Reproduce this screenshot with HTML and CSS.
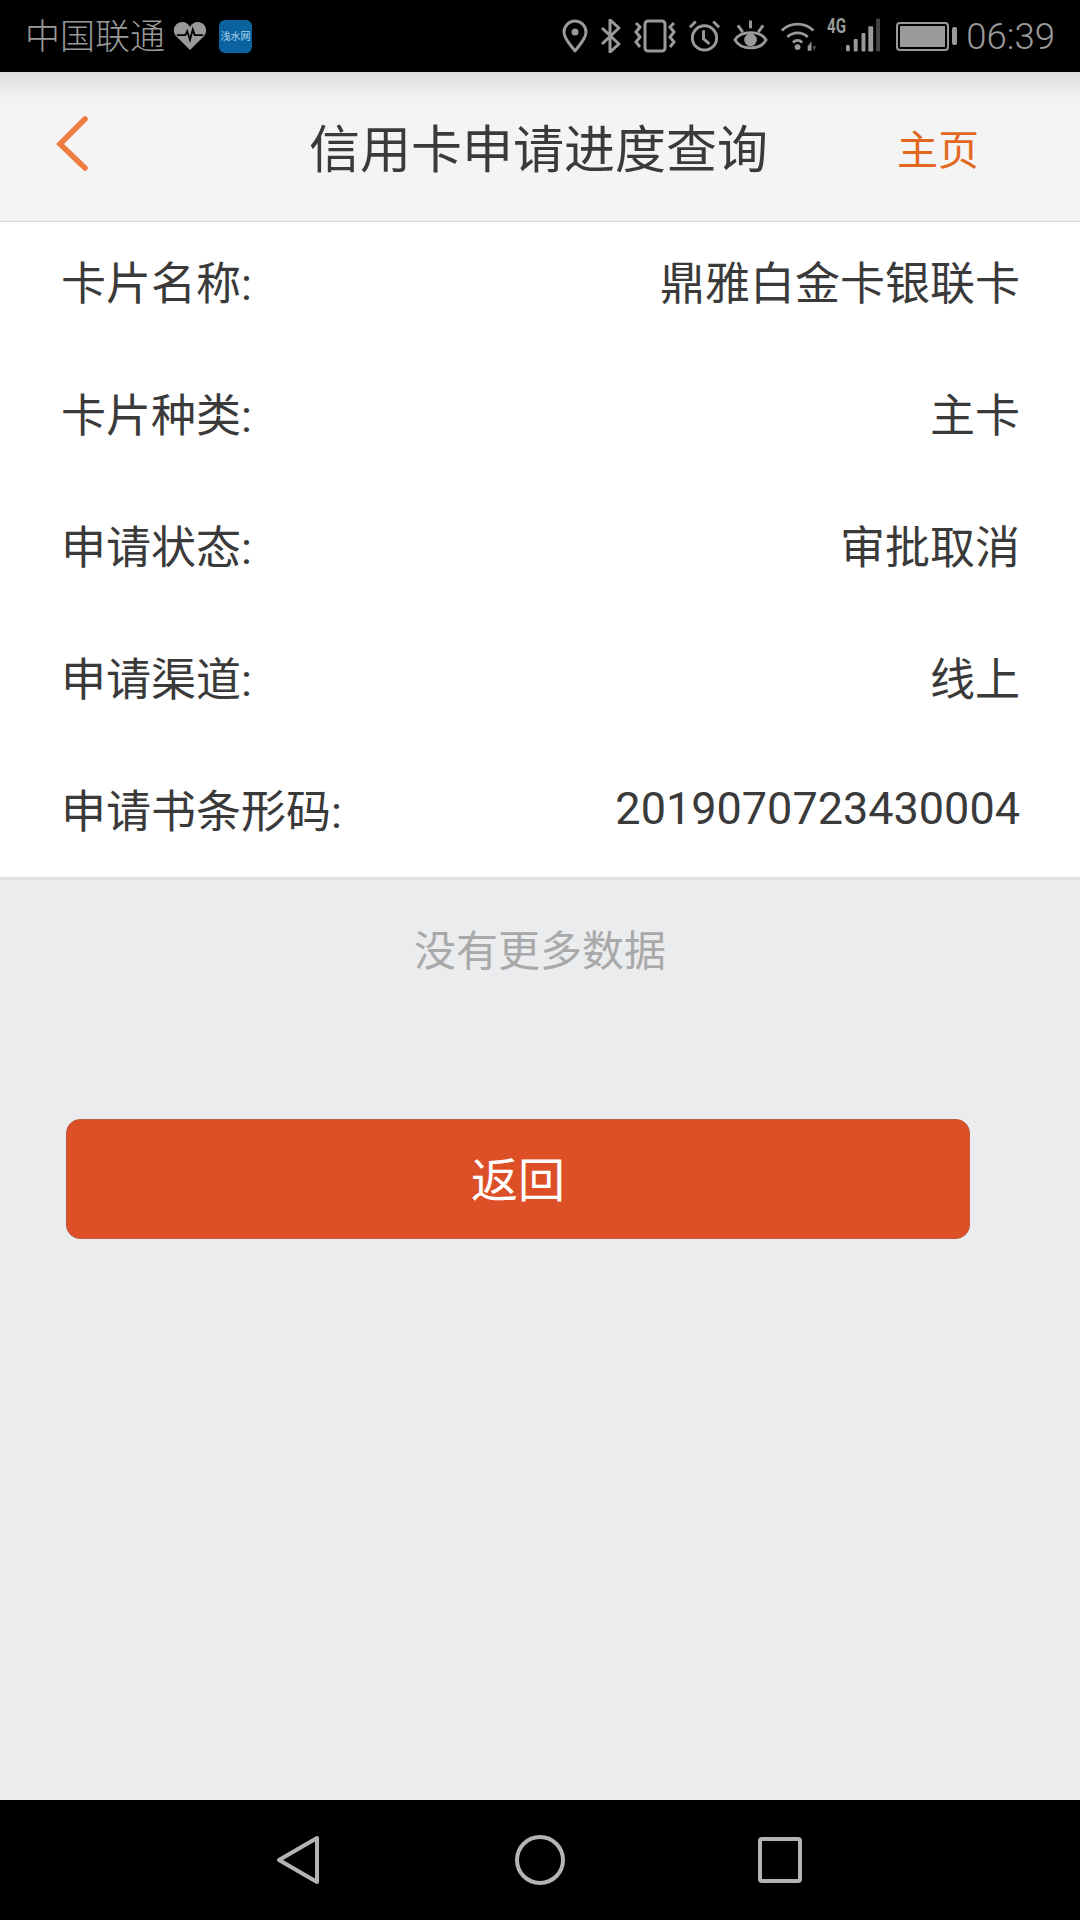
FILE: index.html
```html
<!DOCTYPE html>
<html lang="zh-CN">
<head>
    <meta charset="UTF-8">
    <title>信用卡申请进度查询</title>
    <link rel="stylesheet" href="styles.css">
</head>
<body>

<div class="statusbar">
    <div class="status-left">
        <span class="carrier">中国联通</span>
        <svg class="ic-heart" width="34" height="30" viewBox="0 0 36 32">
            <path d="M18 31 L3 16 C-2 10 2 1 10 1 C13 1 16 3 18 6 C20 3 23 1 26 1 C34 1 38 10 33 16 Z" fill="#9a9a9a"/>
            <path d="M4 15 H13 L15 11 L18 20 L21 9 L23 15 H32" fill="none" stroke="#000" stroke-width="2"/>
        </svg>
        <span class="app-badge">浅水网</span>
    </div>
    <div class="status-right">
        <!-- location -->
        <svg width="26" height="34" viewBox="0 0 26 34">
            <path d="M13 32 C8 25 2 20 2 13 A11 11 0 0 1 24 13 C24 20 18 25 13 32 Z" fill="none" stroke="#9a9a9a" stroke-width="3" stroke-linejoin="round"/>
            <circle cx="13" cy="13" r="3.5" fill="#9a9a9a"/>
        </svg>
        <!-- bluetooth -->
        <svg width="22" height="34" viewBox="0 0 22 34">
            <path d="M2 9 L19 25 L10 33 V1 L19 9 L2 25" fill="none" stroke="#9a9a9a" stroke-width="3" stroke-linejoin="round"/>
        </svg>
        <!-- vibrate -->
        <svg width="42" height="34" viewBox="0 0 42 34">
            <rect x="11" y="2" width="20" height="30" rx="3" fill="none" stroke="#9a9a9a" stroke-width="3"/>
            <path d="M2 4 L6 8 L2 13 L6 18 L2 23 L6 28 M40 4 L36 8 L40 13 L36 18 L40 23 L36 28" fill="none" stroke="#9a9a9a" stroke-width="3"/>
        </svg>
        <!-- alarm -->
        <svg width="33" height="34" viewBox="0 0 34 34">
            <circle cx="17" cy="19" r="12.5" fill="none" stroke="#9a9a9a" stroke-width="3"/>
            <path d="M16 11 V20 L22 25 M2 8 L8 2 M32 8 L26 2" fill="none" stroke="#9a9a9a" stroke-width="3"/>
        </svg>
        <!-- eye -->
        <svg width="35" height="34" viewBox="0 0 36 34">
            <path d="M2 21 C8 11 28 11 34 21 C28 32 8 32 2 21 Z" fill="none" stroke="#9a9a9a" stroke-width="3"/>
            <circle cx="18" cy="21" r="6.5" fill="#9a9a9a"/>
            <path d="M18 1 V9 M5 6 L10 13 M31 6 L26 13" fill="none" stroke="#9a9a9a" stroke-width="3"/>
        </svg>
        <!-- wifi -->
        <svg width="37" height="34" viewBox="0 0 40 34">
            <path d="M2 11 C11 2 27 2 36 11 M8 18 C14 12 24 12 30 18 M14 24 C17 21 21 21 24 24" fill="none" stroke="#9a9a9a" stroke-width="3"/>
            <circle cx="19" cy="29" r="3.2" fill="#9a9a9a"/>
            <path d="M30 28 L34 23 V33 H30 Z" fill="#9a9a9a"/>
            <path d="M35 28 L39 28 L37 33 Z" fill="#555"/>
        </svg>
        <div class="signal">
            <span class="net">4G</span>
            <svg width="35" height="36" viewBox="0 0 36 36">
                <rect x="1" y="27" width="4" height="7" rx="2" fill="#9a9a9a"/>
                <rect x="9" y="21" width="4" height="13" rx="1" fill="#9a9a9a"/>
                <rect x="17" y="15" width="4" height="19" rx="1" fill="#9a9a9a"/>
                <rect x="24" y="8" width="5" height="26" rx="1" fill="#9a9a9a"/>
                <rect x="32" y="0" width="4" height="34" rx="1" fill="#444"/>
            </svg>
        </div>
        <!-- battery -->
        <div class="battery">
            <div class="battery-body"><div class="battery-fill"></div></div>
            <div class="battery-cap"></div>
        </div>
        <span class="clock">06:39</span>
    </div>
</div>

<div class="navbar">
    <svg class="nav-back" width="36" height="58" viewBox="0 0 36 58">
        <path d="M31 4 L6 29 L31 53" fill="none" stroke="#ee7b3f" stroke-width="5.5" stroke-linecap="round"/>
    </svg>
    <h1 class="nav-title">信用卡申请进度查询</h1>
    <span class="nav-home">主页</span>
</div>

<div class="main">
    <div class="info-list">
        <div class="info-row"><span>卡片名称:</span><span>鼎雅白金卡银联卡</span></div>
        <div class="info-row"><span>卡片种类:</span><span>主卡</span></div>
        <div class="info-row"><span>申请状态:</span><span>审批取消</span></div>
        <div class="info-row"><span>申请渠道:</span><span>线上</span></div>
        <div class="info-row"><span>申请书条形码:</span><span>2019070723430004</span></div>
    </div>
    <div class="no-more">没有更多数据</div>
    <button class="btn-back">返回</button>
</div>

<div class="navkeys">
    <svg width="46" height="52" viewBox="0 0 46 52">
        <path d="M41 3 V47 L3 25 Z" fill="none" stroke="#b4b4b4" stroke-width="4" stroke-linejoin="round" transform="translate(0 1)"/>
    </svg>
    <svg width="50" height="50" viewBox="0 0 50 50">
        <circle cx="25" cy="25" r="23" fill="none" stroke="#b4b4b4" stroke-width="4"/>
    </svg>
    <svg width="44" height="46" viewBox="0 0 44 46">
        <rect x="2" y="2" width="40" height="42" rx="2" fill="none" stroke="#b4b4b4" stroke-width="4"/>
    </svg>
</div>

</body>
</html>
```

FILE: styles.css
```css
* {
    box-sizing: border-box;
}
html, body {
    margin: 0;
    padding: 0;
}
body {
    width: 1080px;
    height: 1920px;
    display: flex;
    flex-direction: column;
    background-color: #ebecee;
    font-family: Roboto, "Noto Sans CJK SC", sans-serif;
    overflow: hidden;
}

/* status bar */
.statusbar {
    height: 72px;
    background-color: #000;
    color: #9a9a9a;
    display: flex;
    justify-content: space-between;
    align-items: center;
    padding: 0 25px 0 25px;
}
.status-left, .status-right {
    display: flex;
    align-items: center;
}
.status-right {
    gap: 12px;
}
.carrier {
    font-size: 35px;
    line-height: 40px;
    margin-top: -4px;
    font-family: "Noto Sans CJK SC", sans-serif;
    font-weight: 300;
}
.ic-heart {
    margin-left: 8px;
}
.app-badge {
    width: 33px;
    height: 33px;
    margin-left: 12px;
    border-radius: 6px;
    background-color: #0a639f;
    color: #a9d3ec;
    font-size: 10px;
    line-height: 33px;
    text-align: center;
    white-space: nowrap;
    overflow: hidden;
}
.status-right svg {
    display: block;
}
.signal {
    position: relative;
    padding-left: 18px;
    margin-left: -2px;
}
.net {
    position: absolute;
    left: 0;
    top: 0;
    font-size: 21px;
    line-height: 16px;
    font-weight: bold;
    transform: scaleX(0.72);
    transform-origin: left center;
}
.battery {
    display: flex;
    align-items: center;
    margin-left: 4px;
}
.battery-body {
    width: 53px;
    height: 29px;
    border: 2px solid #9a9a9a;
    border-radius: 4px;
    padding: 2px;
}
.battery-fill {
    height: 100%;
    background-color: #9a9a9a;
}
.battery-cap {
    width: 5px;
    height: 18px;
    margin-left: 3px;
    border-radius: 2px;
    background-color: #9a9a9a;
}
.clock {
    margin-left: -3px;
    font-weight: 300;
    font-size: 36.5px;
}

/* header */
.navbar {
    position: relative;
    height: 150px;
    display: flex;
    align-items: center;
    justify-content: center;
    background: linear-gradient(to bottom, #dcdcdc 0, #f0f0f0 24px, #f4f4f4 40px);
    border-bottom: 1px solid #d4d4d4;
}
.nav-back {
    position: absolute;
    left: 54px;
    top: 43px;
}
.nav-title {
    margin: 0 3px 0 0;
    font-size: 51px;
    font-weight: 400;
    font-family: "Noto Sans CJK SC", sans-serif;
    line-height: 1;
    color: #3a3a3a;
}
.nav-home {
    position: absolute;
    left: 897px;
    top: 51px;
    font-size: 41px;
    line-height: 48px;
    font-family: "Noto Sans CJK SC", sans-serif;
    color: #e2681f;
}

/* list */
.main {
    flex: 1;
}
.info-list {
    background-color: #fff;
    padding: 0 60px 3px 61px;
    border-bottom: 3px solid #dfdfdf;
    display: flex;
    flex-direction: column;
    gap: 8px;
}
.info-row {
    height: 124px;
    padding-bottom: 7px;
    display: flex;
    justify-content: space-between;
    align-items: center;
    font-size: 45px;
    color: #3a3a3a;
}
.no-more {
    margin-top: 42px;
    text-align: center;
    font-size: 42px;
    line-height: 60px;
    color: #a9a9a9;
}
.btn-back {
    display: block;
    width: 904px;
    height: 120px;
    margin: 137px 0 0 66px;
    padding-bottom: 6px;
    border: 1px solid #bd5b3e;
    border-radius: 14px;
    background-color: #dd5027;
    color: #fff;
    font-size: 47px;
    font-family: Roboto, "Noto Sans CJK SC", sans-serif;
}

/* bottom keys */
.navkeys {
    height: 120px;
    background-color: #000;
    display: flex;
    align-items: center;
    padding-left: 276px;
    gap: 193px;
}
```
